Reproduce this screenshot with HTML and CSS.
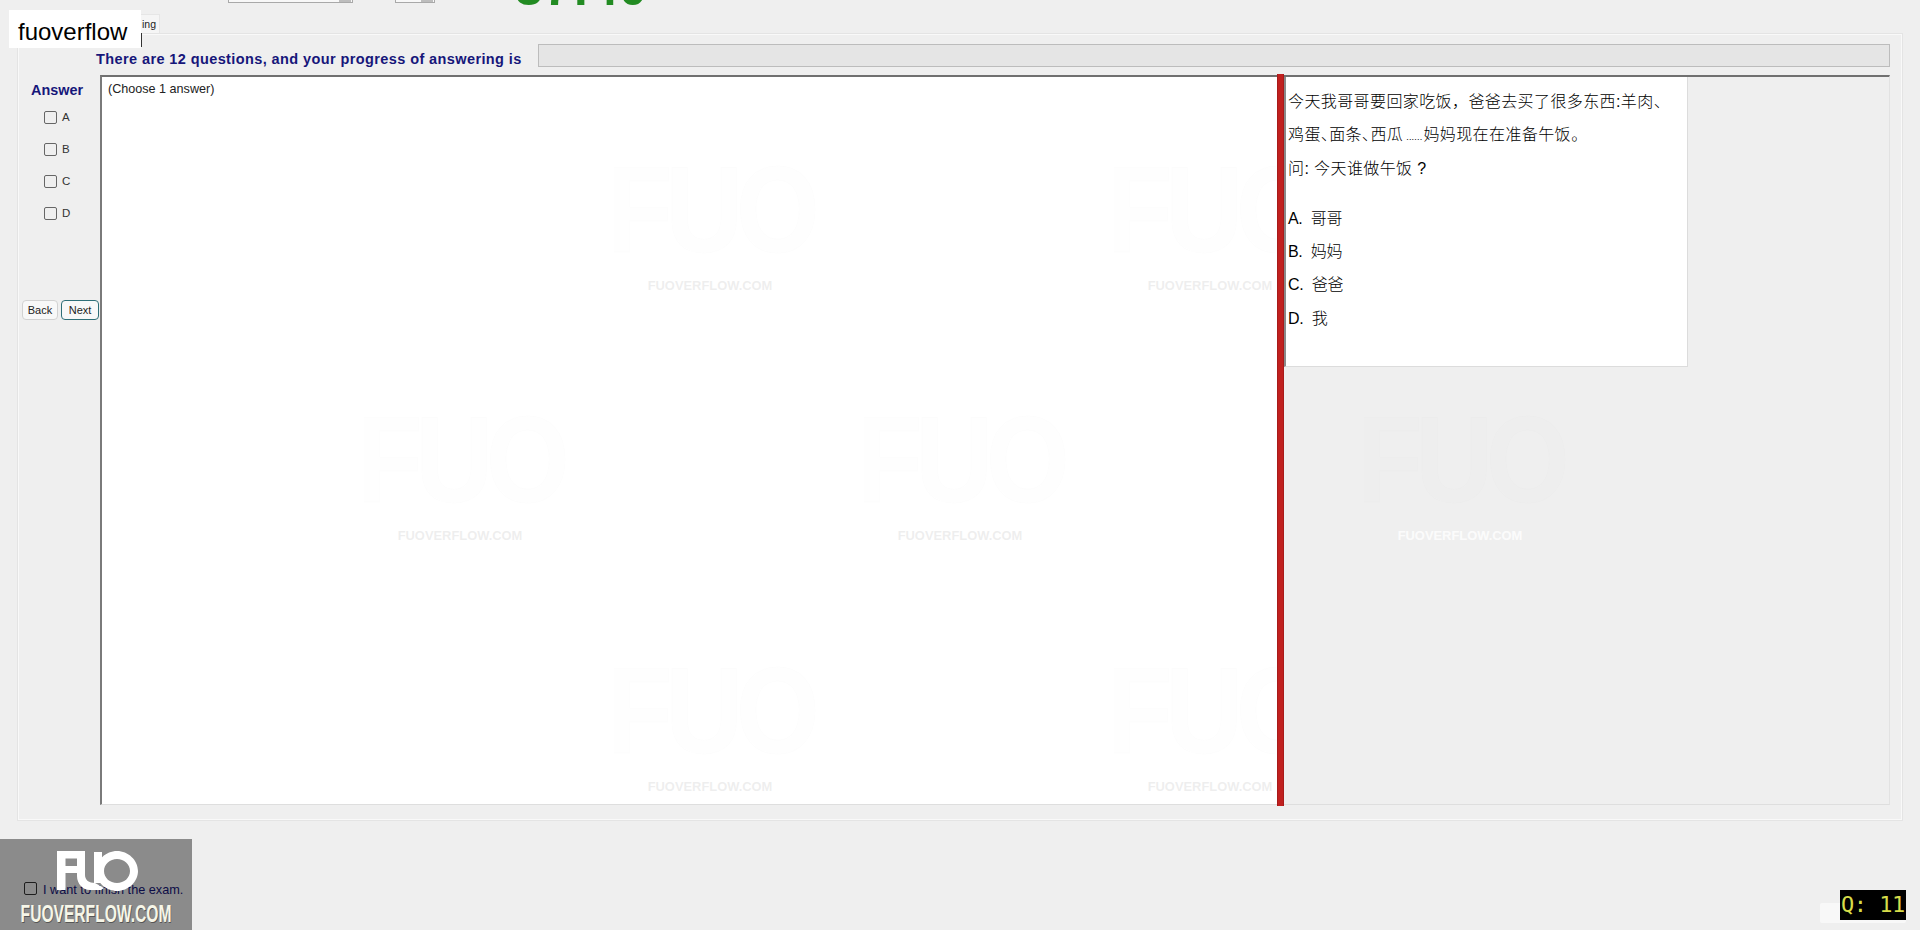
FILE: index.html
```html
<!DOCTYPE html>
<html lang="en">
<head>
<meta charset="utf-8">
<title>Exam</title>
<link rel="stylesheet" href="styles.css">
</head>
<body>
<div class="page">
  <header class="topbar">
    <div class="field field-wide"><span class="spin"></span></div>
    <div class="field field-small"><span class="spin"></span></div>
    <div class="timer">37:40</div>
  </header>
  <div class="tabline">
    <div class="tab">ing</div>
  </div>
  <main class="frame">
    <div class="progress-row">
      <span class="progress-label">There are 12 questions, and your progress of answering is</span>
      <div class="progress-bar"></div>
    </div>
    <div class="work">
      <aside class="side">
        <div class="answer-title">Answer</div>
        <ul class="options">
          <li class="option"><span class="box"></span>A</li>
          <li class="option"><span class="box"></span>B</li>
          <li class="option"><span class="box"></span>C</li>
          <li class="option"><span class="box"></span>D</li>
        </ul>
        <div class="nav">
          <button class="btn">Back</button>
          <button class="btn btn-next">Next</button>
        </div>
      </aside>
      <section class="pane-left">
        <div class="choose">(Choose 1 answer)</div>
      </section>
      <div class="divider"></div>
      <section class="pane-right">
        <div class="question">
          <p class="qline">今天我哥哥要回家吃饭，爸爸去买了很多东西:羊肉、</p>
          <p class="qline qline-tight">鸡蛋、面条、西瓜<span class="dots">......</span>妈妈现在在准备午饭。</p>
          <p class="qline">问: 今天谁做午饭 ?</p>
          <p class="qline qopt qgap">A.&nbsp; 哥哥</p>
          <p class="qline qopt">B.&nbsp; 妈妈</p>
          <p class="qline qopt">C.&nbsp; 爸爸</p>
          <p class="qline qopt">D.&nbsp; 我</p>
        </div>
      </section>
    </div>
  </main>
  <footer class="bottom">
    <label class="finish"><span class="box box-finish"></span>I want to finish the exam.</label>
    <div class="bottom-right">
      <div class="mini"></div>
      <div class="qnum">Q: 11</div>
    </div>
  </footer>
</div>

<div class="brand">fuoverflow</div>

<div class="marks">
  <div class="mark mark1"><span class="mark-logo">FUO</span><span class="mark-url">FUOVERFLOW.COM</span></div>
  <div class="mark mark2"><span class="mark-logo">FUO</span><span class="mark-url">FUOVERFLOW.COM</span></div>
  <div class="mark mark3"><span class="mark-logo">FUO</span><span class="mark-url">FUOVERFLOW.COM</span></div>
  <div class="mark mark4"><span class="mark-logo">FUO</span><span class="mark-url">FUOVERFLOW.COM</span></div>
  <div class="mark mark5"><span class="mark-logo">FUO</span><span class="mark-url">FUOVERFLOW.COM</span></div>
  <div class="mark mark6"><span class="mark-logo">FUO</span><span class="mark-url">FUOVERFLOW.COM</span></div>
  <div class="mark mark7"><span class="mark-logo">FUO</span><span class="mark-url">FUOVERFLOW.COM</span></div>
</div>

<div class="logo">
  <svg class="logo-svg" viewBox="0 0 82 40" width="82" height="40" aria-hidden="true">
    <path fill-rule="evenodd" d="M0 0H28V24C28 29 32 32 38 32L47 37L44 39H33C26 39 20 33 20 25V22H8.5V39H0ZM8.5 7.5V15H20V7.5Z" fill="#fff"/>
    <path d="M37 1H45V32H37Z" fill="#fff"/>
    <path fill-rule="evenodd" d="M60 0C71 0 81 9 81 20C81 31 71 40 60 40C49 40 39 31 39 20C39 9 49 0 60 0ZM60 8C53 8 47 13 47 20C47 27 53 32 60 32C67 32 73 27 73 20C73 13 67 8 60 8Z" fill="#fff"/>
  </svg>
  <div class="logo-url">FUOVERFLOW.COM</div>
</div>
</body>
</html>
```
FILE: styles.css
```css
* { box-sizing: border-box; }
html, body { margin: 0; padding: 0; height: 930px; overflow: hidden; }
body {
  background: #efefef;
  font-family: "Liberation Sans", "Noto Sans CJK SC", sans-serif;
  color: #111;
  position: relative;
}
.page { display: flex; flex-direction: column; height: 930px; }

.topbar { height: 14px; display: flex; align-items: flex-start; padding-left: 228px; }
.field { height: 3px; background: #f8f8f8; border: 1px solid #a9a9a9; border-top: 0; position: relative; }
.field-wide { width: 125px; }
.field-small { width: 40px; margin-left: 42px; }
.spin { position: absolute; right: 1px; bottom: 0; width: 12px; height: 2px; background: #bdbdbd; }
.timer { color: #228b22; font-weight: 700; font-size: 50px; line-height: 50px; margin-top: -37px; margin-left: 80px; letter-spacing: 1px; white-space: nowrap; }

.tabline { height: 19px; padding-left: 106px; display: flex; }
.tab { width: 54px; height: 19px; background: #f5f5f5; border: 1px solid #e6e6e6; border-bottom: 0; font-size: 10.5px; line-height: 18px; text-align: right; padding-right: 3px; color: #222; }

.frame {
  margin: 0 0 0 17px;
  width: 1886px;
  height: 788px;
  border: 2px solid #f9f9f9;
  outline: 1px solid #e4e4e4;
  outline-offset: -1px;
  padding: 9px 11px 0 0;
  display: flex;
  flex-direction: column;
}
.progress-row { display: flex; align-items: center; height: 23px; padding-left: 77px; }
.progress-label { color: #16167a; font-size: 14.5px; font-weight: 700; width: 442px; padding-top: 7px; white-space: nowrap; letter-spacing: .4px; }
.progress-bar { flex: 1; height: 23px; background: #e5e5e5; border: 1px solid #bcbcbc; }

.work { display: flex; height: 730px; margin-top: 8px; }
.side { width: 81px; flex: none; padding-left: 1px; }
.answer-title { color: #16167a; font-size: 14.4px; line-height: 16px; font-weight: 700; padding: 7px 0 0 11px; height: 23px; }
.options { list-style: none; margin: 13px 0 0; padding: 0 0 0 24px; }
.option { height: 32px; display: flex; align-items: flex-start; font-size: 11.5px; line-height: 13px; color: #333; gap: 5px; }
.box { width: 13px; height: 13px; flex: none; border: 1px solid #666; border-radius: 2px; display: block; }
.nav { display: flex; gap: 3px; margin-top: 61px; margin-left: 2px; }
.btn { width: 36px; height: 20px; padding: 0; background: #f8f8f8; border: 1px solid #d2d2d2; border-radius: 4px; font: 11px "Liberation Sans", sans-serif; color: #222; }
.btn-next { width: 38px; border-color: #2f6f78; }

.pane-left { width: 1177px; flex: none; background: #fff; border-top: 2px solid #707070; border-left: 2px solid #7a7a7a; border-bottom: 1px solid #dedede; padding: 5px 0 0 6px; }
.choose { font-size: 12.6px; line-height: 14px; color: #222; }
.divider { width: 7px; flex: none; margin: -1px 0; background: #c0201f; border-left: 1px solid #a81a1a; border-right: 1px solid #a81a1a; }
.pane-right { flex: 1; border-top: 2px solid #707070; border-bottom: 1px solid #dedede; border-right: 1px solid #e2e2e2; }
.question { width: 404px; height: 290px; background: #fff; border-left: 2px solid #8a8a8a; border-right: 1px solid #dcdcdc; border-bottom: 1px solid #dcdcdc; padding: 8px 0 0 2px; }
.qline { margin: 0; height: 33.4px; line-height: 33.4px; font-size: 16px; font-weight: 300; color: #000; white-space: nowrap; letter-spacing: .4px; }
.qline-tight { font-feature-settings: "palt"; }
.qopt { letter-spacing: -.3px; }
.dots { font-size: 9px; letter-spacing: .2px; margin: 0 1px 0 3px; }
.qgap { margin-top: 16.5px; }

.bottom { flex: 1; display: flex; justify-content: space-between; align-items: flex-end; padding: 0 14px 7px 24px; }
.finish { color: #16167a; font-size: 12.7px; display: flex; gap: 6px; align-items: center; margin-bottom: 26px; }
.box-finish { border-color: #333; position: relative; top: -2px; }
.bottom-right { position: relative; width: 86px; height: 33px; display: flex; justify-content: flex-end; align-items: flex-start; }
.mini { position: absolute; left: 0; bottom: 0; width: 86px; height: 20px; background: #f8f8f8; border-radius: 2px; }
.qnum { position: relative; background: #000; color: #d7dc4a; font-family: "DejaVu Sans Mono", monospace; font-size: 22px; line-height: 30px; height: 30px; width: 66px; padding-left: 1px; white-space: nowrap; letter-spacing: -.5px; }

.brand { position: absolute; left: 9px; top: 10px; width: 132px; height: 38px; background: #fff; color: #000; font-size: 24px; line-height: 44px; padding-left: 9px; z-index: 5; }
.brand::after { content: ""; position: absolute; left: 100%; top: 23px; width: 1px; height: 14px; background: #333; }

.marks { position: absolute; inset: 0; pointer-events: none; z-index: 3; }
.mark { position: absolute; width: 210px; display: flex; flex-direction: column; align-items: center; }
.mark-logo { font: 700 122px/106px "Liberation Sans", sans-serif; color: rgba(0,0,0,.004); -webkit-text-stroke: 1px rgba(0,0,0,.012); letter-spacing: -8px; transform: scaleX(.88); }
.mark-url { font: 700 12.9px/16px "Liberation Sans", sans-serif; color: rgba(215,215,215,.42); margin-top: 15px; white-space: nowrap; }
.mark1 { left: 605px; top: 157px; }
.mark2 { left: 1105px; top: 157px; clip-path: inset(0 38px 0 0); }
.mark3 { left: 355px; top: 407px; }
.mark4 { left: 855px; top: 407px; }
.mark5 { left: 1355px; top: 407px; }
.mark5 .mark-url { color: rgba(255,255,255,.8); }
.mark6 { left: 605px; top: 658px; }
.mark7 { left: 1105px; top: 658px; clip-path: inset(0 38px 0 0); }

.logo { position: absolute; left: 0; top: 839px; width: 192px; height: 91px; background: rgba(0,0,0,.42); z-index: 4; display: flex; flex-direction: column; align-items: center; }
.logo-svg { margin-top: 12px; margin-left: 3px; flex: none; }
.logo-url { color: #f6f6e8; font: 700 24px/24px "Liberation Sans", sans-serif; margin-top: 10.5px; white-space: nowrap; transform: scaleX(.65); text-shadow: 1px 1px 0 #555; }
```
